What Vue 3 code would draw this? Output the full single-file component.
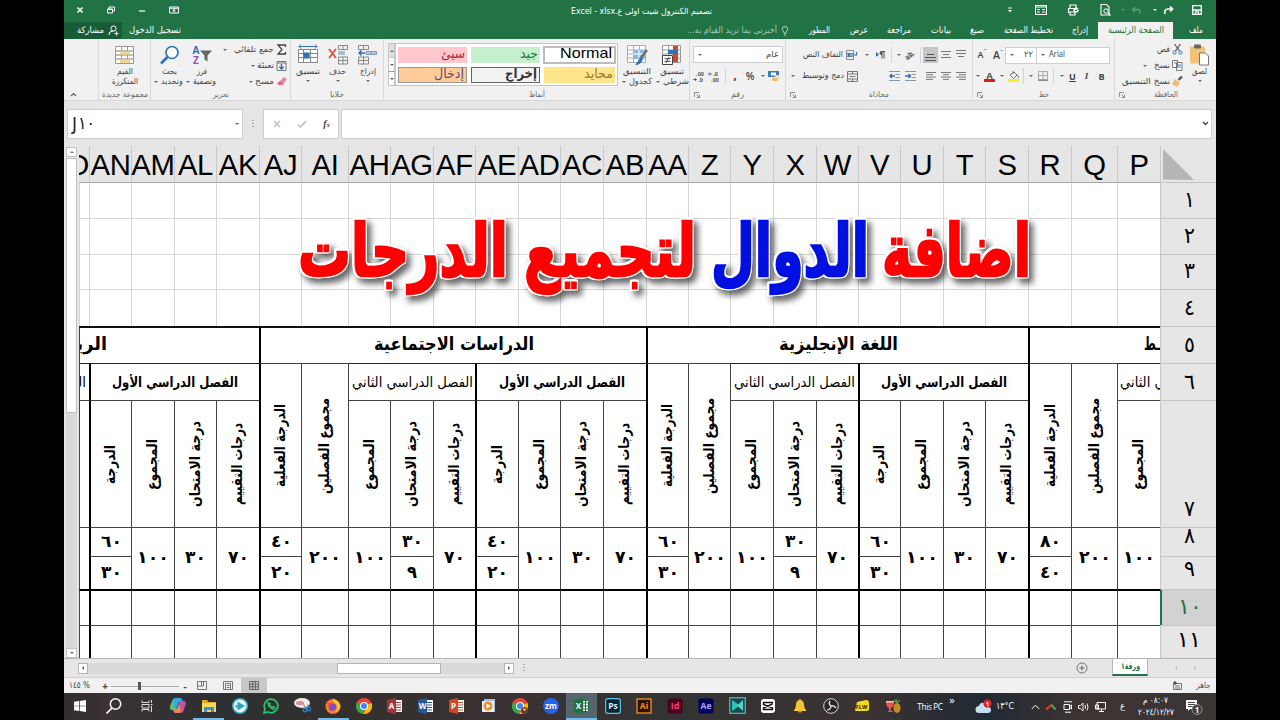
<!-- src/App.vue -->
<template>
  <div class="stage">
    <div class="window">
      <!-- Title bar -->
      <header class="titlebar">
        <div class="win-controls">
          <Ico n="close" /><Ico n="restore" /><Ico n="minimize" /><Ico n="ribbonOpts" />
        </div>
        <div class="doc-title"><Txt t="تصميم الكنترول شيت اولى ع.Excel - xlsx" :w="141" :s="8.5" /></div>
        <div class="quick">
          <Ico n="qatMore" /><Ico n="form" /><Ico n="quickPrint" /><Ico n="preview" />
          <i class="dd faded"></i><Ico n="undo" /><i class="dd"></i><Ico n="redo" /><Ico n="save" />
        </div>
      </header>

      <!-- Ribbon tabs -->
      <nav class="tabs">
        <div class="share"><Txt t="مشاركة" :w="27" :s="9" /><Ico n="person" /></div>
        <Txt class="signin" t="تسجيل الدخول" :w="52" :s="9" />
        <div class="tell"><Txt t="أخبرني بما تريد القيام به..." :w="90" :s="9" /><Ico n="bulb" /></div>
        <div class="tab-list">
          <Txt v-for="tab in tabs" :key="tab.t" :t="tab.t" :w="tab.w" :s="9" />
        </div>
        <div class="tab-active"><Txt t="الصفحة الرئيسية" :w="56" :s="9" /></div>
        <Txt class="file" t="ملف" :w="14" :s="9" />
      </nav>

      <!-- Ribbon -->
      <section class="ribbon">
        <div class="group g-collapse"><Ico n="chevUp" /></div>

        <div class="group g-new">
          <div class="body center">
            <div class="big"><Ico n="table" /><Txt t="القيم" :w="16" :s="8.5" /><Txt t="المتكررة" :w="26" :s="8.5" /></div>
          </div>
          <div class="label"><Txt t="مجموعة جديدة" :w="46" :s="8" /></div>
        </div>

        <div class="group g-edit">
          <div class="body">
            <div class="big"><Ico n="find" /><Txt t="بحث" :w="15" :s="8.5" /><span class="pair"><i class="dd"></i><Txt t="وتحديد" :w="22" :s="8.5" /></span></div>
            <div class="big"><Ico n="sort" /><Txt t="فرز" :w="10" :s="8.5" /><span class="pair"><i class="dd"></i><Txt t="وتصفية" :w="23" :s="8.5" /></span></div>
            <div class="stack">
              <span><i class="dd wide"></i><Txt t="جمع تلقائي" :w="40" :s="8.5" /><Ico n="sigma" /></span>
              <span><i class="dd"></i><Txt t="تعبئة" :w="17" :s="8.5" /><Ico n="fillDown" /></span>
              <span><i class="dd"></i><Txt t="مسح" :w="19" :s="8.5" /><Ico n="eraser" /></span>
            </div>
          </div>
          <div class="label"><Txt t="تحرير" :w="16" :s="8" /></div>
        </div>

        <div class="group g-cells">
          <div class="body">
            <div class="big"><Ico n="cellFormat" /><Txt t="تنسيق" :w="24" :s="8.5" /><i class="dd"></i></div>
            <div class="big"><Ico n="cellDelete" /><Txt t="حذف" :w="17" :s="8.5" /><i class="dd"></i></div>
            <div class="big"><Ico n="cellInsert" /><Txt t="إدراج" :w="16" :s="8.5" /><i class="dd"></i></div>
          </div>
          <div class="label"><Txt t="خلايا" :w="14" :s="8" /></div>
        </div>

        <div class="group g-styles">
          <div class="body">
            <div class="gallery">
              <div class="gal-scroll"><b><i class="dd up"></i></b><b><i class="dd"></i></b><b class="last"><i class="dd"></i></b></div>
              <div class="swatches">
                <div class="sw bad"><Txt t="سيئ" :w="24" :s="13.5" /></div>
                <div class="sw good"><Txt t="جيد" :w="18" :s="13.5" /></div>
                <div class="sw normal"><Txt t="Normal" :w="52" :s="15" f="Liberation Sans" /></div>
                <div class="sw input"><Txt t="إدخال" :w="30" :s="13.5" /></div>
                <div class="sw output"><Txt t="إخراج" :w="32" :s="13.5" b /></div>
                <div class="sw neutral"><Txt t="محايد" :w="29" :s="13.5" /></div>
              </div>
            </div>
            <div class="big"><Ico n="tableBrush" /><Txt t="التنسيق" :w="28" :s="8.5" /><span class="pair"><i class="dd"></i><Txt t="كجدول" :w="23" :s="8.5" /></span></div>
            <div class="big"><Ico n="cond" /><Txt t="تنسيق" :w="24" :s="8.5" /><span class="pair"><i class="dd"></i><Txt t="شرطي" :w="26" :s="8.5" /></span></div>
          </div>
          <div class="label"><Txt t="أنماط" :w="16" :s="8" /></div>
        </div>

        <div class="group g-number">
          <div class="body rows">
            <div class="combo"><i class="dd"></i><Txt t="عام" :w="13" :s="8.5" /></div>
            <div class="tools num-tools">
              <Ico n="decLess" /><Ico n="decMore" /><u class="sep"></u><b class="comma">,</b><b class="pct">%</b><i class="dd"></i><Ico n="currency" />
            </div>
          </div>
          <div class="label"><Ico n="launcher" /><Txt t="رقم" :w="13" :s="8" /></div>
        </div>

        <div class="group g-align">
          <div class="body rows">
            <div class="tools al-1">
              <span></span><span class="pair"><Txt t="التفاف النص" :w="40" :s="8.5" /><Ico n="wrap" /></span><i class="dd"></i><Ico n="pilcrow" /><u class="sep"></u><i class="dd"></i><Ico n="orient" /><u class="sep"></u>
              <span class="on"><Ico n="vBottom" /></span><Ico n="vMiddle" /><Ico n="vTop" />
            </div>
            <div class="tools al-2">
              <i class="dd"></i><span class="pair"><Txt t="دمج وتوسيط" :w="42" :s="8.5" /><Ico n="merge" /></span><span></span><Ico n="indentL" /><Ico n="indentR" /><span></span>
              <Ico n="lines" /><Ico n="linesC" /><Ico n="linesR" />
            </div>
          </div>
          <div class="label"><Ico n="launcher" /><Txt t="محاذاة" :w="20" :s="8" /></div>
        </div>

        <div class="group g-font">
          <div class="body rows">
            <div class="tools ft-1">
              <b class="grow small">A<sup>ˇ</sup></b><b class="grow">A<sup>ˆ</sup></b>
              <div class="combo"><i class="dd"></i><Txt t="٢٢" :w="9" :s="8.5" /></div>
              <div class="combo arial"><i class="dd"></i><Txt t="Arial" :w="16" :s="8.5" f="Open Sans" /></div>
            </div>
            <div class="tools ft-2">
              <i class="dd"></i><Ico n="fontColor" /><i class="dd"></i><Ico n="bucket" /><u class="sep"></u><i class="dd"></i><Ico n="borders" /><u class="sep"></u><i class="dd"></i>
              <b class="und">U</b><b class="ita">I</b><b>B</b>
            </div>
          </div>
          <div class="label"><Ico n="launcher" /><Txt t="خط" :w="10" :s="8" /></div>
        </div>

        <div class="group g-clip">
          <div class="body">
            <div class="stack">
              <span><Txt t="قص" :w="13" :s="8.5" /><Ico n="scissors" /></span>
              <span><i class="dd wide"></i><Txt t="نسخ" :w="16" :s="8.5" /><Ico n="copy" /></span>
              <span><Txt t="نسخ التنسيق" :w="48" :s="8.5" /><Ico n="painter" /></span>
            </div>
            <div class="big"><Ico n="paste" /><Txt t="لصق" :w="15" :s="8.5" /><i class="dd"></i></div>
          </div>
          <div class="label"><Ico n="launcher" /><Txt t="الحافظة" :w="24" :s="8" /></div>
        </div>
      </section>

      <!-- Formula bar -->
      <section class="formula">
        <div class="name-box"><span>J<Txt t="١٠" :w="17" :s="17" /></span><i class="dd"></i></div>
        <span class="dots"></span>
        <div class="fx-box"><Ico n="cancel" /><Ico n="check" /><em>f<small>x</small></em></div>
        <div class="fx-input"><Ico n="chevDown" /></div>
      </section>

      <!-- Worksheet -->
      <section class="sheet">
        <div class="vscroll"><b><i class="dd up"></i></b><div class="vthumb"></div><div class="vtrack"></div><b><i class="dd"></i></b></div>
        <div class="pane">
          <div class="cols">
            <div class="col-head first"><span>AO</span></div>
            <div v-for="c in columns" :key="c.name" class="col-head">{{ c.name }}</div>
            <div class="corner"><Ico n="corner" /></div>
          </div>
          <div class="main">
            <div class="cells">
              <template v-for="r in 4" :key="'r' + r">
                <div v-for="c in 26" :key="c" class="cell light" :class="{ major: c === 6 || c === 24 }" :style="at(c, r)"></div>
              </template>

              <div class="cell subject" :style="at(1, 5, 5)"><Txt class="cut-maths" t="الرياضيات" :w="86" :s="18.5" b /></div>
              <div class="cell subject thick" :style="at(6, 5, 9)"><Txt t="الدراسات الاجتماعية" :w="160" :s="18.5" b /></div>
              <div class="cell subject thick" :style="at(15, 5, 9)"><Txt t="اللغة الإنجليزية" :w="119" :s="18.5" b /></div>
              <div class="cell subject thick" :style="at(24, 5, 3)"><Txt class="cut-end" t="ـط" :w="16" :s="18.5" b /></div>

              <div class="cell term" :style="at(1, 6)"><Txt class="cut-term" t="الفصل الدراسي الثاني" :w="121" :s="14" /></div>
              <template v-for="s in [2, 11, 20]" :key="'t' + s">
                <div class="cell term thick" :style="at(s, 6, 4)"><Txt t="الفصل الدراسي الأول" :w="126" :s="14" b /></div>
              </template>
              <template v-for="s in [8, 17]" :key="'u' + s">
                <div class="cell term" :style="at(s, 6, 3)"><Txt t="الفصل الدراسي الثاني" :w="121" :s="14" /></div>
              </template>
              <div class="cell term" :style="at(26, 6)"><Txt class="cut-right" t="الفصل الدراسي الثاني" :w="121" :s="14" /></div>

              <div class="cell" :style="at(1, 7)"></div>
              <div class="cell" :style="at(1, 8, 1, 2)"></div>
              <template v-for="(c, i) in columns" :key="'c' + c.name">
                <div class="cell" :class="{ thick: c.thick }" :style="c.tall ? at(i + 2, 6, 1, 2) : at(i + 2, 7)">
                  <Txt :t="labels[c.k].t" :w="labels[c.k].w" :s="15" b v />
                </div>
                <template v-if="c.n.length === 2">
                  <div class="cell num" :class="{ thick: c.thick }" :style="at(i + 2, 8)"><Txt :t="c.n[0]" :w="numWidth(c.n[0])" :s="17" b /></div>
                  <div class="cell num" :class="{ thick: c.thick }" :style="at(i + 2, 9)"><Txt :t="c.n[1]" :w="numWidth(c.n[1])" :s="17" b /></div>
                </template>
                <div v-else class="cell num" :style="at(i + 2, 8, 1, 2)"><Txt :t="c.n[0]" :w="numWidth(c.n[0])" :s="17" b /></div>
              </template>

              <template v-for="r in [10, 11]" :key="'e' + r">
                <div v-for="c in 26" :key="c" class="cell" :class="{ thick: c > 1 && columns[c - 2].thick, top: r === 10 }" :style="at(c, r)"></div>
              </template>
            </div>
            <div class="row-heads">
              <div v-for="(r, i) in rowHeads" :key="r" :class="{ active: i === 9 }"><Txt :t="r" :w="i > 8 ? 24 : 11" :s="22" /></div>
            </div>
          </div>
          <!-- Caption lying over the cells -->
          <svg class="caption" width="780" height="120" viewBox="0 0 780 120">
            <text v-for="w in caption" :key="w.t" :x="w.x + w.w / 2" y="76" :textLength="w.w" lengthAdjust="spacingAndGlyphs" :fill="w.c" :stroke="w.c">{{ w.t }}</text>
          </svg>
        </div>
      </section>

      <!-- Sheet tabs and horizontal scroll -->
      <section class="sheet-bar">
        <div class="hscroll"><b><i class="tri-l"></i></b><div class="htrack"><div class="hthumb"></div></div><b><i class="tri-r"></i></b></div>
        <span class="dots"></span>
        <div class="sheet-tabs">
          <Ico n="plus" />
          <div class="sheet-tab"><Txt t="ورقة١" :w="19" :s="8.5" b /></div>
          <i class="tri-l pale"></i><i class="tri-r pale"></i>
        </div>
      </section>

      <section class="status">
        <Txt class="zoom-pct" t="١٤٥ %" :w="21" :s="8.5" ltr />
        <b>+</b>
        <div class="slider"><i></i></div>
        <b>-</b>
        <div class="views"><span><Ico n="viewBreak" /></span><span><Ico n="viewPage" /></span><span class="sel"><Ico n="viewGrid" /></span></div>
        <div class="ready"><Ico n="macro" /><Txt t="جاهز" :w="15" :s="8.5" /></div>
      </section>

      <footer class="taskbar">
        <div class="task start"><Ico n="windows" /></div>
        <div class="task search"><Ico n="search" /></div>
        <div v-for="a in apps" :key="a" class="task" :class="{ open: a === 'explorer' || a === 'firefox', current: a === 'excel' }"><Ico :n="a" /></div>
        <div class="tray">
          <span class="this-pc">This PC</span><sup>»</sup>
          <span class="weather"><Ico n="cloud" /><Txt t="١٣°C" :w="18" :s="9.5" ltr /></span>
          <span class="tray-icons"><Ico n="trayUp" /><Ico n="trayRg" /><Ico n="trayCam" /><Ico n="traySound" /><Ico n="trayNet" /></span>
          <Txt class="lang" t="ع" :w="5" :s="9" />
          <span class="clock"><Txt t="٠٨:٠٧ م" :w="25" :s="8.5" /><Txt t="٢٠٢٤/١٢/٢٧" :w="36" :s="8.5" ltr /></span>
          <Ico n="notify" />
        </div>
      </footer>
    </div>
  </div>
</template>

<script setup>
import { h } from 'vue';

// Text fitted to a known width, v turns it upwards
const Txt = (p) => {
  const has = (k) => p[k] !== undefined;
  const tall = Math.round(p.s * 1.2);
  const w = has('v') ? tall : p.w;
  const ht = has('v') ? p.w : tall;
  return h('svg', { width: w, height: ht, style: 'overflow:visible;flex:none;display:block' }, [
    h('text', {
      x: p.w / 2,
      y: tall * 0.74,
      transform: has('v') ? `translate(0 ${p.w}) rotate(-90)` : null,
      textLength: p.w,
      lengthAdjust: 'spacingAndGlyphs',
      'text-anchor': 'middle',
      direction: has('ltr') || has('f') ? 'ltr' : 'rtl',
      'font-size': p.s,
      'font-weight': has('b') ? 700 : 400,
      'font-family': `"${p.f || 'DejaVu Sans'}", "DejaVu Sans", sans-serif`,
      fill: 'currentColor'
    }, p.t)
  ]);
};
Txt.props = ['t', 'w', 's', 'b', 'f', 'v', 'ltr'];

const line = (d, c = '#666', w = 1) => `<path d="${d}" fill="none" stroke="${c}" stroke-width="${w}"/>`;
const fill = (d, c) => `<path d="${d}" fill="${c}"/>`;
const rect = (x, y, w, ht, c, r = 0) => `<rect x="${x}" y="${y}" width="${w}" height="${ht}" rx="${r}" fill="${c}"/>`;
const word = (t, x, y, s, c) => `<text x="${x}" y="${y}" font-size="${s}" font-weight="700" font-family="Open Sans, sans-serif" text-anchor="middle" fill="${c}">${t}</text>`;
const office = (t, c) => rect(8, 2, 7, 12, '#fff') + line('M9 4.5h5M9 7h5M9 9.500h5M9 12h5', c) + fill('M0 2l9-2v16l-9-2z', c) + word(t, 4.5, 11, 8, '#fff');
const chrome = '<circle cx="8" cy="8" r="8" fill="#ea4335"/>' + fill('M8 8L1 4A8 8 0 0 0 7.500 16z', '#34a853') + fill('M8 8l7.500-3A8 8 0 0 1 7.500 16l3-6z', '#fbbc05') + '<circle cx="8" cy="8" r="4" fill="#fff"/><circle cx="8" cy="8" r="3" fill="#4285f4"/>';
const grid = (c) => rect(.5, .5, 18, 17, '#fff') + line('M.5 .5h18v17h-18zM.5 5h18M.5 9h18M.5 13h18M6.500 .5v17M12.500 .5v17', c);

const icons = {
  close: [8, 8, line('M1.500 1.500l5 5M6.500 1.500l-5 5', '#fff', 1.6)],
  restore: [8, 8, line('M.5 3h5v4h-5zM2 3V1h5.500v4H5.500M.5 3.500h5', '#fff')],
  minimize: [8, 8, line('M1 5h6', '#fff', 1.2)],
  ribbonOpts: [10, 8, line('M.5 1h9v6h-9zM.5 2.300h9M5 6.500V3.500M3.500 4.800L5 3.400l1.500 1.400', '#fff')],
  qatMore: [6, 6, line('M1.200 1h3.600', '#fff') + fill('M1 3h4L3 5.200z', '#fff')],
  form: [12, 10, line('M.5 .5h11v9H.5zM.5 2h11M2 4.500h3M2 7h3M7 4.500h3.500M7 7h3.500', '#fff', 1.1)],
  quickPrint: [12, 12, line('M3 4V1h6v3M1.500 9V4.500h9V8M3 8h5v3H3z', '#fff', 1.2) + '<circle cx="9" cy="6" r="2.600" fill="#fff"/>' + line('M8 6l1 1 2-2', '#217346')],
  preview: [11, 12, line('M1 .5h5.500L9 3v8H1z', '#fff', 1.1) + '<circle cx="6" cy="7" r="2.200" fill="#217346" stroke="#fff"/>' + line('M8 9l2.500 2.500', '#fff', 1.3)],
  undo: [11, 9, line('M4 1L1.500 3.500 4 6M2 3.500h4.500Q9.500 3.500 9 8', '#5c9a78', 1.4)],
  redo: [11, 9, line('M7 .5L9.500 3 7 5.500M9 3H5Q1 3 2 8', '#fff', 1.6)],
  save: [10, 10, line('M.7 .7h8.600v8.600H.7zM1 5h8M3.500 9V6.800h3V9', '#fff', 1.3)],
  person: [11, 11, '<circle cx="5.500" cy="3.500" r="2.600" fill="none" stroke="#fff"/>' + line('M1 10q0-4 4.500-4M8.500 6.500v4M6.500 8.500h4', '#fff', 1.1)],
  bulb: [8, 10, line('M3 7.500V6Q1 4.500 1.300 3A2.700 2.500 0 0 1 6.700 3Q7 4.500 5 6v1.500zM3 9.200h2', '#b5d6c3', .9)],
  chevUp: [7, 5, line('M1 4l2.500-2.500L6 4', '#555', 1.1)],
  chevDown: [7, 5, line('M1 1l2.500 2.500L6 1', '#444', 1.3)],
  table: [20, 18, grid('#999') + rect(5, 5, 10, 4, '#f3d68a') + rect(5, 13, 10, 4, '#f3d68a') + line('M.5 5h18M.5 9h18M.5 13h18', '#aaa', .8)],
  find: [19, 19, '<circle cx="12" cy="7" r="6" fill="#fff" stroke="#2f70b7" stroke-width="1.700"/>' + line('M7.500 11.500L1 18', '#2f70b7', 2.6)],
  sort: [20, 19, word('A', 4, 8, 10, '#2f70b7') + word('Z', 4, 18.500, 10, '#9254b5') + fill('M8 5h12l-4.500 5v6l-3-2v-4z', '#666')],
  sigma: [10, 11, line('M9 3V1H1.500l4 4.500-4 4.500H9V8', '#444', 1.3)],
  fillDown: [10, 10, line('M.5 .5h9v9h-9zM.5 2h9', '#777') + line('M5 3v5M2.800 5.800L5 8l2.200-2.200', '#2f70b7', 1.4)],
  eraser: [11, 9, fill('M4 4l4-4 3 2-4 5.500H4.500L2 6z', '#e8879b') + fill('M4 4l3 3.500-.5.500H3L1 6.500z', '#d86c85')],
  cellFormat: [20, 21, line('M1 2h18M3 0L1 2l2 2M17 0l2 2-2 2', '#2f70b7') + rect(.5, 5, 19, 13, '#fff') + line('M.5 5h19v13H.5zM.5 9h19M.5 13h19M5.500 5v13M12.500 5v13', '#888') + rect(5.500, 8, 6, 6, '#2f70b7')],
  cellDelete: [20, 20, line('M10.500 .5h9v4h-9zM15 .5v4M10.500 12h9v7h-9zM15 12v7M10.500 15.500h9', '#888') + rect(10, 6, 7, 4, '#a9bdd0') + line('M1 4l7 9M8 4l-7 9', '#e0503c', 1.8)],
  cellInsert: [19, 20, line('M.5 .5h10v4H.5zM5.500 .5v4M.5 12h10v7H.5zM5.500 12v7M.5 15.500h10', '#888') + rect(8, 6, 10, 4, '#b9c9d8') + line('M8 6.500h10.500v3H8zM13 6.500v3', '#7f9db9') + line('M7 8H1M3.500 5.500L1 8l2.500 2.500', '#2f70b7', 1.5)],
  tableBrush: [21, 20, grid('#aab') + rect(6, 5, 12, 9, '#8fb8df') + line('M6 9h13M12 5v9', '#fff') + line('M20 5l-6 8', '#666', 2.2) + fill('M13 12l3 2q-2 6-8 6 3-3 5-8z', '#2f70b7')],
  cond: [21, 20, grid('#999') + rect(11, 1, 5, 4, '#d0442f') + rect(6, 5, 10, 4, '#2f70b7') + rect(11, 9, 5, 8, '#d0442f') + rect(.5, 10.500, 10, 9, '#fff') + line('M.5 10.500h10v9H.5zM2.500 13.700h6M2.500 16.300h6M7 12l-3 6', '#444')],
  decLess: [11, 11, word('.00', 7, 5, 5.500, '#555') + word('.0', 7.500, 10.500, 5.500, '#555') + line('M0 8.500h3.500M2 7l1.500 1.500L2 10', '#2f70b7')],
  decMore: [11, 11, word('.0', 7.500, 5, 5.500, '#555') + word('.00', 7, 10.500, 5.500, '#555') + line('M4 3H.5M2 1.500L.5 3 2 4.500', '#2f70b7')],
  currency: [12, 12, rect(0, 1, 11, 6, '#3f7cba') + rect(3, 2.500, 5, 3, '#fff') + rect(4, 8, 6, 3, '#e9b862', 1) + rect(7, 5, 4, 4, '#f0d9a8', 1)],
  wrap: [12, 11, line('M.5 .5h7v9h-7zM.5 3.500h7M.5 6.500h7', '#888') + line('M2 5h8.500V2M4 3L2 5l2 2', '#2f70b7', 1.2)],
  merge: [11, 11, line('M.5 .5h10v10H.5zM.5 3h10M.5 8h10M5.500 .5V3M5.500 8v2.500M2.500 5.500h6', '#777')],
  pilcrow: [9, 8, fill('M0 1l3 2.500L0 6z', '#2f70b7') + fill('M6 0Q3.500 0 3.500 2T6 4z', '#555') + line('M6 .5V7.500M8 .5V7.500M5.500 .5H9', '#555')],
  orient: [11, 10, `<g transform="rotate(-40 4 6)">${word('ab', 4, 8, 7, '#555')}</g>` + line('M3 9.500L10 4', '#777')],
  vBottom: [11, 12, line('M2 5.500h7M0 8.500h11M0 11.500h11', '#555')],
  vMiddle: [10, 8, line('M0 .5h10M2 3.500h6M0 6.500h10', '#777')],
  vTop: [10, 10, line('M0 .5h10M0 3.500h10M2 6.500h6', '#777')],
  lines: [10, 8, line('M0 .5h10M0 2.700h7M0 5h10M0 7.300h7', '#777')],
  linesC: [10, 8, line('M0 .5h10M2 2.700h6M0 5h10M2 7.300h6', '#777')],
  linesR: [10, 8, line('M0 .5h10M3 2.700h7M0 5h10M3 7.300h7', '#777')],
  indentL: [11, 10, line('M0 .5h11M6.500 3.500H11M6.500 6.500H11M0 9.500h11', '#8797a6') + line('M6 5H1M3 3L1 5l2 2', '#2f70b7', 1.4)],
  indentR: [11, 10, line('M0 .5h11M6.500 3.500H11M6.500 6.500H11M0 9.500h11', '#8797a6') + line('M0 5h5M3.500 3l2 2-2 2', '#2f70b7', 1.4)],
  fontColor: [11, 11, word('A', 5.500, 7.500, 9.500, '#555') + rect(0, 8, 11, 3, '#d9201a')],
  bucket: [12, 11, line('M2 4l4-3 3 3-3.500 3.500zM5 0v3M9 4q2 1 1.500 3', '#777') + rect(0, 8, 11, 3, '#f2ef2c')],
  borders: [10, 10, line('M.5 .5h9v8h-9zM5 .5v9M.5 4.500h9', '#aaa') + line('M0 9.300h10', '#777')],
  scissors: [10, 11, line('M2 0l5 7M8 0L3 7', '#555', 1.2) + '<circle cx="2" cy="8.500" r="1.600" fill="none" stroke="#2f70b7"/><circle cx="8" cy="8.500" r="1.600" fill="none" stroke="#2f70b7"/>'],
  copy: [11, 11, '<path d="M.5 .5h5v7h-5zM4.500 2.500h5.500v8H4.500z" fill="#fff" stroke="#777"/>' + line('M6 5h3M6 7h3M2 3h2', '#2f70b7', .9)],
  painter: [11, 11, line('M6.500 4L10 .5', '#555', 2.4) + fill('M3 3l5 4-3 4L0 8z', '#eebb70')],
  paste: [19, 21, rect(0, 2, 15, 17, '#f0c377', 1) + rect(4, 0, 7, 4, '#666', 1) + '<path d="M9.500 8.500h6l3 3v9h-9z" fill="#fff" stroke="#777"/>'],
  launcher: [6, 6, line('M.5 5V.5H5M2.500 5.500h3v-3M5.500 5.500L2.500 2.500', '#777', .8)],
  cancel: [8, 8, line('M1 1l6 6M7 1L1 7', '#bbb', 1.2)],
  check: [10, 8, line('M1 4.500L3.500 7 9 1', '#bbb', 1.3)],
  corner: [55, 36, fill('M2 3v30.500l31 .5z', '#b5b5b5')],
  plus: [12, 12, '<circle cx="6" cy="6" r="5" fill="none" stroke="#777"/>' + line('M3.500 6h5M6 3.500v5', '#666')],
  viewBreak: [10, 9, line('M.5 .5h9v8h-9zM4.500 .5V5H.5M6.500 .5V5h-2', '#777')],
  viewPage: [10, 9, line('M.5 .5h9v8h-9zM2.500 2.500h5v6M2.500 2.500v6M4 4.500h2.500M4 6.500h2.500', '#777')],
  viewGrid: [10, 9, line('M.5 .5h9v8h-9zM.5 3.200h9M.5 5.800h9M3.500 .5v8M6.500 .5v8', '#666')],
  macro: [9, 9, line('M.5 2.500h8v6h-8zM2 5h5M2 7h5', '#777') + '<circle cx="2" cy="2" r="1.700" fill="#555"/>'],
  windows: [12, 12, fill('M0 1.700L5 1v4.700H0zM5.700 .9L12 0v5.700H5.700zM0 6.300h5V11l-5-.7zM5.700 6.300H12V12l-6.300-.9z', '#fff')],
  search: [16, 16, '<circle cx="9.500" cy="6" r="5.200" fill="none" stroke="#fff" stroke-width="1.500"/>' + line('M6 10l-5.500 5.500', '#fff', 1.7)],
  taskview: [12, 12, line('M1 .5v2h7v-2M1 4.500h7v3.500H1zM1 11.500v-2h7v2M10.500 0v3M10.500 6v6M9.500 4.500h2', '#ddd')],
  copilot: [16, 15, fill('M5 0h5q2 0 2.500 2l.5 2H9L6 12H2Q-.5 12 .5 8l2-6Q3 0 5 0z', '#35a7e0') + fill('M0 8l3-6 1 7 3 3H2q-2 0-2-4z', '#63c06f') + fill('M11 15H6q-2 0-2.500-2L3 11h4l3-8h4q2.500 0 1.500 4l-2 6q-.5 2-2.500 2z', '#c0559f') + fill('M3 11h4l2-5 2 7-2 2H6q-2 0-3-4z', '#f08a4b')],
  explorer: [16, 14, fill('M1 1h5l1.500 2H15v10H1z', '#e5a823') + rect(1, 4, 14, 9, '#fbd75c') + fill('M3 8h10v5h-3v-2H6v2H3z', '#3e8fd0')],
  telegram: [16, 16, '<circle cx="8" cy="8" r="8" fill="#31a9c9"/><circle cx="8" cy="8" r="6.500" fill="#e9f7fb"/>' + fill('M5.500 3.500L13 8l-7.500 4.500z', '#2b9fc4') + fill('M3 7l4 1-3 2z', '#2b9fc4')],
  whatsapp: [16, 16, line('M1 15l1-4A6.800 6.800 0 1 1 5 14z', '#2bc26a', 1.7) + line('M5 4.500q-1 4 5.500 7l1.500-2-2-1-1 .8Q6.500 8 6.500 7l.8-1z', '#2bc26a', 1.4)],
  snip: [17, 15, '<ellipse cx="8" cy="5" rx="8" ry="5" fill="#efe6e8"/><ellipse cx="6" cy="5" rx="4" ry="2" fill="#d98d98"/>' + line('M9 5l3 6M15 6l-4 5', '#999', 1.2) + '<circle cx="11" cy="12" r="1.800" fill="none" stroke="#2f83c9" stroke-width="1.300"/><circle cx="15" cy="11" r="1.800" fill="none" stroke="#2f83c9" stroke-width="1.300"/>'],
  firefox: [16, 16, '<circle cx="8" cy="8.500" r="7.500" fill="#ff7a2a"/>' + fill('M8 0q1 2 4 3 4 3 3 7-2 4-5 4 4-4 1-8-3-1-3-6z', '#ffc933') + '<circle cx="7.500" cy="9" r="3.700" fill="#7b4bd0"/>' + fill('M1 3l3 2q3-1 4 1-3 0-3 2-3 0-4-5z', '#ff4b3e')],
  chrome: [16, 16, chrome],
  access: [16, 16, office('A', '#a4373a')],
  word: [16, 16, office('W', '#2b579a')],
  powerpoint: [16, 16, office('P', '#d24726')],
  media: [14, 14, rect(2, 0, 11, 13, '#9bc4dc') + rect(0, 2, 12, 11, '#e8edf0') + '<circle cx="6" cy="7" r="4.500" fill="#f18a2b"/>' + fill('M4.500 4.500L9 7l-4.500 2.500z', '#fff')],
  chrome2: [16, 16, chrome + '<circle cx="12.500" cy="12.500" r="3.500" fill="#69402f"/><circle cx="12.500" cy="11.500" r="1.300" fill="#e4b99a"/>'],
  zoom: [16, 16, '<circle cx="8" cy="8" r="8" fill="#2563eb"/>' + word('zm', 8, 10.800, 8, '#fff')],
  excel: [16, 16, rect(8, 2, 7, 12, '#fff') + line('M8.500 2.500h6v11h-6M8.500 5h6M8.500 8h6M8.500 11h6M11.500 2.500v11', '#217346') + fill('M0 2l9-2v16l-9-2z', '#1e7145') + word('X', 4.500, 11, 8, '#fff')],
  ps: [16, 16, rect(.7, .7, 14.600, 14.600, '#0a2433', 2) + '<rect x=".7" y=".7" width="14.600" height="14.600" rx="2" fill="none" stroke="#5ac8e8" stroke-width="1.200"/>' + word('Ps', 8, 11.300, 8.500, '#d7f3ff')],
  ai: [16, 16, '<rect x="1" y="1" width="14" height="14" fill="#2b1200" stroke="#f7931e" stroke-width="1.300"/>' + word('Ai', 8, 11.300, 8.500, '#f7931e')],
  id: [16, 16, rect(.5, .5, 15, 15, '#49021f', 2.500) + word('Id', 8, 11.300, 9, '#ff3d7f')],
  ae: [16, 16, rect(.5, .5, 15, 15, '#00005b', 2.500) + word('Ae', 8, 11.300, 8.500, '#b3a5ff')],
  filmora: [17, 17, '<rect x=".7" y=".7" width="15.600" height="15.600" fill="#17484a" stroke="#4fb3ad" stroke-width="1.300"/>' + fill('M3 3l8 5.500L3 14z', '#2fc5b5') + fill('M14 3v11L8 8.500z', '#53d3c6')],
  capcut: [16, 16, rect(1, 1, 14, 14, '#fff', 3) + line('M12.500 5.500V4.500h-9v2l9 3.500v1.500h-9V10l9-4', '#111', 1.400)],
  bell: [14, 14, fill('M7 0q1 0 1 1.200Q11 2 11 6q0 3 2 5v1H1v-1q2-2 2-5 0-4 3-4.800Q6 0 7 0z', '#f6c52e') + rect(5, 12, 4, 1.600, '#d68f1a', .8)],
  obs: [16, 16, '<circle cx="8" cy="8" r="7.300" fill="#262427" stroke="#d8d8d8"/>' + line('M8 8Q5 6 7 3M8 8q3-1 5 2M8 8q-.5 4-4 4', '#ddd', 1.500)],
  fl: [14, 12, fill('M2 2l9-2q3 0 3 3v6q0 2-2 2H0z', '#f5dc1a') + word('FLW', 6.500, 8.500, 5.500, '#222')],
  juice: [16, 14, '<ellipse cx="12" cy="9" rx="3.500" ry="5" fill="#c58a2a"/>' + line('M12 4l-1-4M12 4l3-3M12 4l-3-3', '#4c9a3a', 1.300) + fill('M1 3h8q0 5-3 6v3h2v1H3v-1h1V9Q1 8 1 3z', '#e2574c') + rect(1, 2, 8, 1.500, '#f6c3b0')],
  cloud: [17, 15, fill('M4 14a3.500 3.500 0 0 1 0-7Q5 3 9 4q3 0 4 4a3 3 0 0 1 0 6z', '#c5dcf3') + '<circle cx="12.500" cy="4.500" r="4" fill="#d8232a"/>' + word('1', 12.500, 7, 6, '#fff')],
  trayUp: [9, 6, line('M.7 5L4.500 1.200 8.300 5', '#fff')],
  trayRg: [12, 8, line('M1 6.500l6-5', '#e23b33', 2) + line('M6.500 2l4 4.500', '#35b54a', 2)],
  trayCam: [10, 12, line('M1 .8h8M1 3.500h5.500v5H1zM6.500 5.500l2-1.500v4l-2-1.500M2 11.200h6', '#fff')],
  traySound: [11, 10, line('M.5 3.500h2L5 1v8L2.500 6.500h-2zM7 3q1.200 2 0 4M9 1.500q2 3.500 0 7', '#fff', .9)],
  trayNet: [11, 10, line('M2 .5h8.500v6.500H2zM.5 3h3v4h-3zM4 9.500h5M6.500 7v2', '#fff')],
  notify: [17, 17, fill('M0 2h11v9H4l-2 2v-2H0z', '#fff') + line('M2 4.500h7M2 6.500h7M2 8.500h5', '#444') + '<circle cx="11" cy="11.500" r="5" fill="#3f3c3d" stroke="#aaa" stroke-width=".8"/>' + word('1', 11, 14.500, 8, '#fff')]
};

const Ico = (p) => {
  const [w, ht, body] = icons[p.n];
  return h('svg', { width: w, height: ht, viewBox: `0 0 ${w} ${ht}`, style: 'flex:none;display:block', innerHTML: body });
};
Ico.props = ['n'];

const tabs = [
  { t: 'المطور', w: 21 },
  { t: 'عرض', w: 18 },
  { t: 'مراجعة', w: 24 },
  { t: 'بيانات', w: 20 },
  { t: 'صيغ', w: 14 },
  { t: 'تخطيط الصفحة', w: 49 },
  { t: 'إدراج', w: 16 }
];

const labels = {
  d: { t: 'الدرجة', w: 39 },
  m: { t: 'المجموع', w: 51 },
  x: { t: 'درجة الامتحان', w: 86 },
  e: { t: 'درجات التقييم', w: 82 },
  a: { t: 'الدرجة الفعلية', w: 83 },
  s: { t: 'مجموع الفصلين', w: 96 }
};

const col = (name, k, ...n) => ({ name, k, n, thick: k === 'd' || k === 'a', tall: k === 'a' || k === 's' });
const columns = [
  col('AN', 'd', '٦٠', '٣٠'), col('AM', 'm', '١٠٠'), col('AL', 'x', '٣٠'), col('AK', 'e', '٧٠'),
  col('AJ', 'a', '٤٠', '٢٠'), col('AI', 's', '٢٠٠'), col('AH', 'm', '١٠٠'), col('AG', 'x', '٣٠', '٩'), col('AF', 'e', '٧٠'),
  col('AE', 'd', '٤٠', '٢٠'), col('AD', 'm', '١٠٠'), col('AC', 'x', '٣٠'), col('AB', 'e', '٧٠'),
  col('AA', 'a', '٦٠', '٣٠'), col('Z', 's', '٢٠٠'), col('Y', 'm', '١٠٠'), col('X', 'x', '٣٠', '٩'), col('W', 'e', '٧٠'),
  col('V', 'd', '٦٠', '٣٠'), col('U', 'm', '١٠٠'), col('T', 'x', '٣٠'), col('S', 'e', '٧٠'),
  col('R', 'a', '٨٠', '٤٠'), col('Q', 's', '٢٠٠'), col('P', 'm', '١٠٠')
];
const rowHeads = ['١', '٢', '٣', '٤', '٥', '٦', '٧', '٨', '٩', '١٠', '١١'];
const numWidth = (n) => n.length * 11 - 1;

const caption = [
  { t: 'اضافة', x: 627, w: 149, c: '#fe0000' },
  { t: 'الدوال', x: 456, w: 158, c: '#0010e0' },
  { t: 'لتجميع', x: 269, w: 172, c: '#fe0000' },
  { t: 'الدرجات', x: 43, w: 210, c: '#fe0000' }
];

const apps = ['taskview', 'copilot', 'explorer', 'telegram', 'whatsapp', 'snip', 'firefox', 'chrome', 'access', 'word', 'powerpoint', 'media', 'chrome2', 'zoom', 'excel', 'ps', 'ai', 'id', 'ae', 'filmora', 'capcut', 'bell', 'obs', 'fl', 'juice'];

// Grid area of a cell or a merged range
const at = (c, r, cs = 1, rs = 1) => ({ gridArea: `${r} / ${c} / span ${rs} / span ${cs}` });
</script>

<style>
body { background: #000; }
</style>

<style scoped>
* { box-sizing: border-box; }
.stage { width: 1280px; height: 720px; padding: 0 64px; background: #000; overflow: hidden; font-family: "Open Sans", "DejaVu Sans", sans-serif; }
.window { width: 1152px; height: 720px; display: flex; flex-direction: column; background: #e6e6e6; color: #444; overflow: hidden; }

/* small drop-down triangle */
.dd { flex: none; width: 0; height: 0; border: 2px solid transparent; border-top: 2.500px solid #666; border-bottom: 0; }
.dd.up { border-top: 0; border-bottom: 2.500px solid #777; }

.titlebar { height: 22px; display: flex; align-items: center; background: #217346; color: #fff; }
.win-controls { display: flex; gap: 23px; padding: 0 0 2px 12px; }
.doc-title { flex: 1; padding: 2px 0 0 392px; }
.quick { display: flex; align-items: center; padding: 0 14px 2px 0; }
.quick svg:nth-child(1) { margin-right: 22px; }
.quick svg:nth-child(2) { margin-right: 20px; }
.quick svg:nth-child(3) { margin-right: 21px; }
.quick svg:nth-child(4) { margin-right: 10px; }
.quick svg:nth-child(6) { margin: 0 11px 0 6px; }
.quick svg:nth-child(8) { margin: 0 18px 0 6px; }
.quick .dd { border-top-color: #fff; }
.quick .faded { border-top-color: #5c9a78; }

.tabs { height: 17px; display: flex; align-items: center; background: #217346; color: #fff; }
.share { width: 58px; height: 17px; display: flex; align-items: center; gap: 4px; padding-left: 13px; background: #185c37; }
.signin { margin-left: 7px; }
.tell { display: flex; align-items: center; gap: 4px; margin-left: 506px; color: #9cc7af; }
.tab-list { display: flex; gap: 19.500px; margin-left: 20px; }
.tab-active { width: 75px; height: 17px; display: flex; align-items: center; justify-content: center; margin-left: 10px; background: #f1f1f1; color: #217346; }
.file { margin-left: 16px; }

.ribbon { height: 62px; display: flex; background: #f1f1f1; border-bottom: 1px solid #d8d8d8; }
.group { display: flex; flex-direction: column; border-left: 1px solid #d9d9d9; }
.body { height: 51px; display: flex; padding-top: 5px; }
.body.rows { flex-direction: column; padding-top: 7px; gap: 3px; }
.center { justify-content: center; }
.label { height: 11px; display: flex; align-items: center; justify-content: center; color: #666; }
.label svg:first-child:not(:last-child) { margin-right: auto; margin-left: 4px; }
.label svg:last-child:not(:first-child) { margin-right: auto; margin-left: -10px; }
.big { display: flex; flex-direction: column; align-items: center; }
.big > svg:first-child { height: 22px; margin-bottom: 1px; }
.big > .dd { margin-top: 3px; }
.pair { display: flex; align-items: center; gap: 3px; }
.stack { display: flex; flex-direction: column; gap: 5px; align-items: flex-end; }
.stack > span { height: 11px; display: flex; align-items: center; gap: 2px; }
.stack .wide { margin-right: 5px; }
.stack svg:last-child { width: 11px; }

.g-collapse { width: 34px; border: 0; justify-content: flex-end; padding: 0 0 3px 6px; }
.g-new { width: 52px; }
.g-edit { width: 140px; }
.g-edit .body { padding-left: 4px; gap: 3px; }
.g-edit .stack { width: 68px; }
.g-edit .big:nth-child(1), .g-edit .big:nth-child(2) { width: 29px; }
.g-edit .big:nth-child(1) .pair, .g-edit .big:nth-child(2) .pair { margin-left: -2px; }
.g-cells { width: 93px; }
.g-cells .body { padding-left: 4px; gap: 5px; }
.g-cells .big { width: 25px; }
.g-styles { width: 306px; }
.g-styles .body { padding: 4px 0 0 4px; gap: 3px; }
.g-styles .big { width: 32px; padding-top: 1px; }
.g-number { width: 96px; }
.g-align { width: 187px; }
.g-font { width: 142px; }
.g-clip { width: 102px; }
.g-clip .body { gap: 7px; }
.g-clip .stack { width: 68px; }

.gallery { width: 230px; height: 43px; display: flex; }
.gal-scroll { width: 10px; display: flex; flex-direction: column; }
.gal-scroll b { flex: 1; display: flex; align-items: center; justify-content: center; border: 1px solid #c6c6c6; background: #fff; margin-bottom: -1px; }
.gal-scroll b:first-child { background: #e0e0e0; }
.gal-scroll .last { border-top: 1px solid #999; margin-bottom: 0; }
.swatches { flex: 1; display: grid; grid-template-columns: 69px 69px 71px; grid-template-rows: 16px 16px; gap: 4px; padding: 3px 2px; border: 1px solid #c6c6c6; background: #fff; }
.sw { display: flex; align-items: center; justify-content: flex-end; padding: 0 2px 2px; }
.bad { background: #ffc7ce; color: #b0273a; }
.good { background: #c6efce; color: #1e7a2e; }
.normal { border: 2px solid #bdbdbd; margin: -1px; color: #000; background: #fff; }
.input { background: #ffcc99; border: 1px solid #999; color: #5a4a78; }
.output { background: #f2f2f2; border: 1px solid #666; color: #333; }
.neutral { background: #ffe58a; color: #9c7a28; }

.combo { height: 17px; display: flex; align-items: center; justify-content: space-between; padding: 0 3px 0 4px; border: 1px solid #cfcfcf; background: #fff; }
.g-number .combo { width: 90px; margin-left: 3px; }
.tools { height: 18px; display: grid; align-items: center; justify-items: center; font-size: 9px; }
.sep { width: 1px; height: 16px; background: #d5d5d5; }
.num-tools { grid-template-columns: 15px 14px 10px 10px 20px 5px 18px; padding-left: 1px; margin-top: 1px; }
.comma { font-size: 13px; line-height: 8px; padding-bottom: 4px; }
.pct { font-size: 10px; font-weight: 600; }
.al-1 { grid-template-columns: 14px 60px 14px 12px 10px 6px 16px 5px 15px 15px 15px; }
.al-2 { grid-template-columns: 14px 60px 26px 16px 16px 5px 15px 15px 15px; }
.on { width: 15px; height: 16px; display: flex; align-items: center; justify-content: center; background: #c5c5c5; }
.ft-1 { grid-template-columns: 18px 14px 32px 74px; }
.ft-1 .combo { width: 100%; }
.ft-1 .arial { justify-content: flex-start; gap: 4px; margin-left: -2px; }
.grow { font-size: 10.500px; font-weight: 600; line-height: 14px; white-space: nowrap; }
.small { font-size: 9px; }
.grow sup { font-size: 7px; color: #2f70b7; line-height: 0; }
.ft-2 { grid-template-columns: 10px 13px 11px 14px 4px 12px 11px 10px 8px 13px 15px 15px; }
.und { text-decoration: underline; }
.ita { font-style: italic; font-family: "Liberation Serif", serif; }

.formula { height: 45px; display: flex; align-items: center; padding: 0 4px 0 3px; }
.formula > div { height: 30px; display: flex; align-items: center; border: 1px solid #cdcdcd; background: #fff; }
.name-box { width: 176px; justify-content: space-between; padding: 0 3px 0 4px; }
.name-box span { display: flex; align-items: center; gap: 1px; font: 17px "DejaVu Sans", sans-serif; color: #222; }
.dots { width: 2px; height: 8px; margin: 0 9px 0 9px; background: repeating-linear-gradient(#aaa 0 1px, transparent 1px 3px); }
.fx-box { width: 76px; justify-content: space-between; padding: 0 8px 0 9px; }
.fx-box em { font: italic bold 10px "Liberation Serif", serif; }
.fx-box small { font-size: 7px; }
.fx-input { flex: 1; justify-content: flex-end; margin-left: 2px; padding-right: 2px; }

.sheet { height: 512px; display: flex; }
.vscroll { width: 12px; margin: 1px 2px 0 1px; padding-left: 1px; display: flex; flex-direction: column; }
.vscroll b { height: 10px; display: flex; align-items: center; justify-content: center; border: 1px solid #c2c2c2; background: #fff; }
.vthumb { height: 255px; margin-top: 1px; border: 1px solid #c2c2c2; background: #fff; }
.vtrack { flex: 1; background: #d9d9d9; }
.pane { position: relative; flex: 1; overflow: hidden; }
.cols { height: 36px; display: grid; grid-template-columns: 10px 42px 43px 42px 43px 42px 47px 42px 43px 42px 43px 42px 43px 43px 42px 42px 43px 43px 42px 42px 43px 42px 43px 43px 46px 43px 56px; }
.col-head { display: flex; justify-content: center; align-items: center; padding-top: 2px; border-left: 1px solid #c9c9c9; font: 29.300px "Liberation Sans", sans-serif; letter-spacing: -.3px; color: #000; }
.first { justify-content: flex-end; overflow: hidden; border: 0; }
.corner { border-left: 1px solid #c9c9c9; }
.main { display: flex; }
.cells { width: 1081px; height: 476px; display: grid; overflow: hidden; background: #fff; grid-template-columns: 10px 42px 43px 42px 43px 42px 47px 42px 43px 42px 43px 42px 43px 43px 42px 42px 43px 43px 42px 42px 43px 42px 43px 43px 46px 43px; grid-template-rows: 36px 36px 35px 37px 37px 37px 127px 29px 33px 36px 33px; }
.cell { min-width: 0; display: flex; align-items: center; justify-content: center; overflow: hidden; border-left: 1px solid #444; border-top: 1px solid #444; color: #000; }
.light { border-color: #d6d6d6; }
.light[style^="grid-area: 1 "] { border-top-color: #a5a5a5; }
.subject { border-top: 2px solid #111; padding-bottom: 2px; }
.term { border-top-color: #222; }
.num { padding-bottom: 1px; }
.thick { border-left: 2px solid #000; }
.top { border-top: 2px solid #000; }
.cut-maths { margin-left: -212px; }
.cut-end { margin-left: 114px; }
.cut-term { margin-left: -118px; }
.cut-right { margin-left: 82px; }
.row-heads { width: 56px; display: grid; grid-template-rows: 36px 36px 35px 37px 37px 37px 127px 29px 33px 36px 33px; }
.row-heads div { min-height: 0; display: flex; align-items: flex-end; justify-content: center; padding: 0 0 4px 1px; border-top: 1px solid #c6c6c6; border-left: 1px solid #c6c6c6; color: #000; }
.row-heads div:nth-child(8), .row-heads div:nth-child(9) { padding-bottom: 6px; }
.row-heads .active { background: #d2d2d2; color: #217346; border-left: 2px solid #217346; }
.caption { position: absolute; left: 176px; top: 54px; overflow: visible; filter: drop-shadow(1.500px 0 0 #fff) drop-shadow(-1.500px 0 0 #fff) drop-shadow(0 1.500px 0 #fff) drop-shadow(0 -1.500px 0 #fff) drop-shadow(4px 5px 3px rgba(0, 0, 0, .6)); }
.caption text { font: bold 73px "DejaVu Sans", sans-serif; direction: rtl; text-anchor: middle; stroke-width: 2.500px; stroke-linejoin: miter; }

.sheet-bar { height: 19px; display: flex; align-items: center; border-top: 1px solid #b5b5b5; padding-left: 14px; }
.hscroll { width: 436px; height: 11px; display: flex; }
.hscroll b { width: 10px; display: flex; align-items: center; justify-content: center; border: 1px solid #b5b5b5; background: #fff; }
.htrack { flex: 1; display: flex; padding-left: 249px; background: #d9d9d9; }
.hthumb { width: 104px; border: 1px solid #b5b5b5; background: #fff; }
.tri-l, .tri-r { width: 0; height: 0; border: 2.500px solid transparent; }
.tri-l { border-right-color: #555; border-left: 0; }
.tri-r { border-left-color: #555; border-right: 0; }
.tri-l.pale { border-right-color: #bbb; margin-left: 27px; }
.tri-r.pale { border-left-color: #bbb; margin-left: 17px; }
.sheet-tabs { flex: 1; display: flex; align-items: center; justify-content: flex-end; padding-right: 20px; height: 18px; }
.sheet-tab { width: 36px; height: 17px; display: flex; align-items: center; justify-content: center; align-self: flex-start; margin-left: 24px; background: #fff; border: solid #b5b5b5; border-width: 0 1px; border-bottom: 2px solid #217346; color: #217346; }

.status { height: 16px; display: flex; align-items: center; background: #f1f1f1; border-top: 1px solid #cfcfcf; font-size: 10px; padding-left: 5px; }
.status > b { width: 12px; text-align: center; line-height: 12px; }
.zoom-pct { margin-right: 9px; }
.slider { width: 68px; height: 8px; padding-left: 27px; background: linear-gradient(#aaa, #aaa) 0 4px / 68px 1px no-repeat; }
.slider i { display: block; width: 3px; height: 8px; background: #555; }
.views { display: flex; height: 15px; margin-left: -2px; }
.views span { width: 26px; display: flex; align-items: center; justify-content: center; }
.views .sel { background: #c8c8c8; }
.ready { display: flex; align-items: center; gap: 14px; margin-left: auto; padding-right: 5px; color: #555; }

.taskbar { height: 27px; display: flex; background: linear-gradient(90deg, #332e2f, #3a3233 4%, #2d3033 14%, #35302f 25%, #3a3132 40%, #333 52%, #3b3232 70%, #202a33 80%, #3d3333 88%, #3b3535); color: #fff; }
.task { flex: none; width: 31.100px; display: flex; align-items: center; justify-content: center; border-bottom: 2px solid transparent; }
.start { width: 32px; }
.search { width: 35px; }
.open { border-bottom-color: #76b9ed; }
.current { background: #56646b; border-bottom-color: #76b9ed; }
.tray { flex: 1; display: flex; align-items: center; padding: 0 6px 0 9px; white-space: nowrap; }
.this-pc { font-size: 8.200px; letter-spacing: -.35px; width: 27px; }
.tray sup { font-size: 11px; margin: -14px 20px 0 5px; }
.weather { display: flex; align-items: center; gap: 4px; }
.tray-icons { display: flex; align-items: center; gap: 5.500px; margin-left: 17px; }
.lang { margin-left: 14px; }
.clock { display: flex; flex-direction: column; align-items: center; gap: 2px; margin: 0 12px 0 13px; }
</style>
